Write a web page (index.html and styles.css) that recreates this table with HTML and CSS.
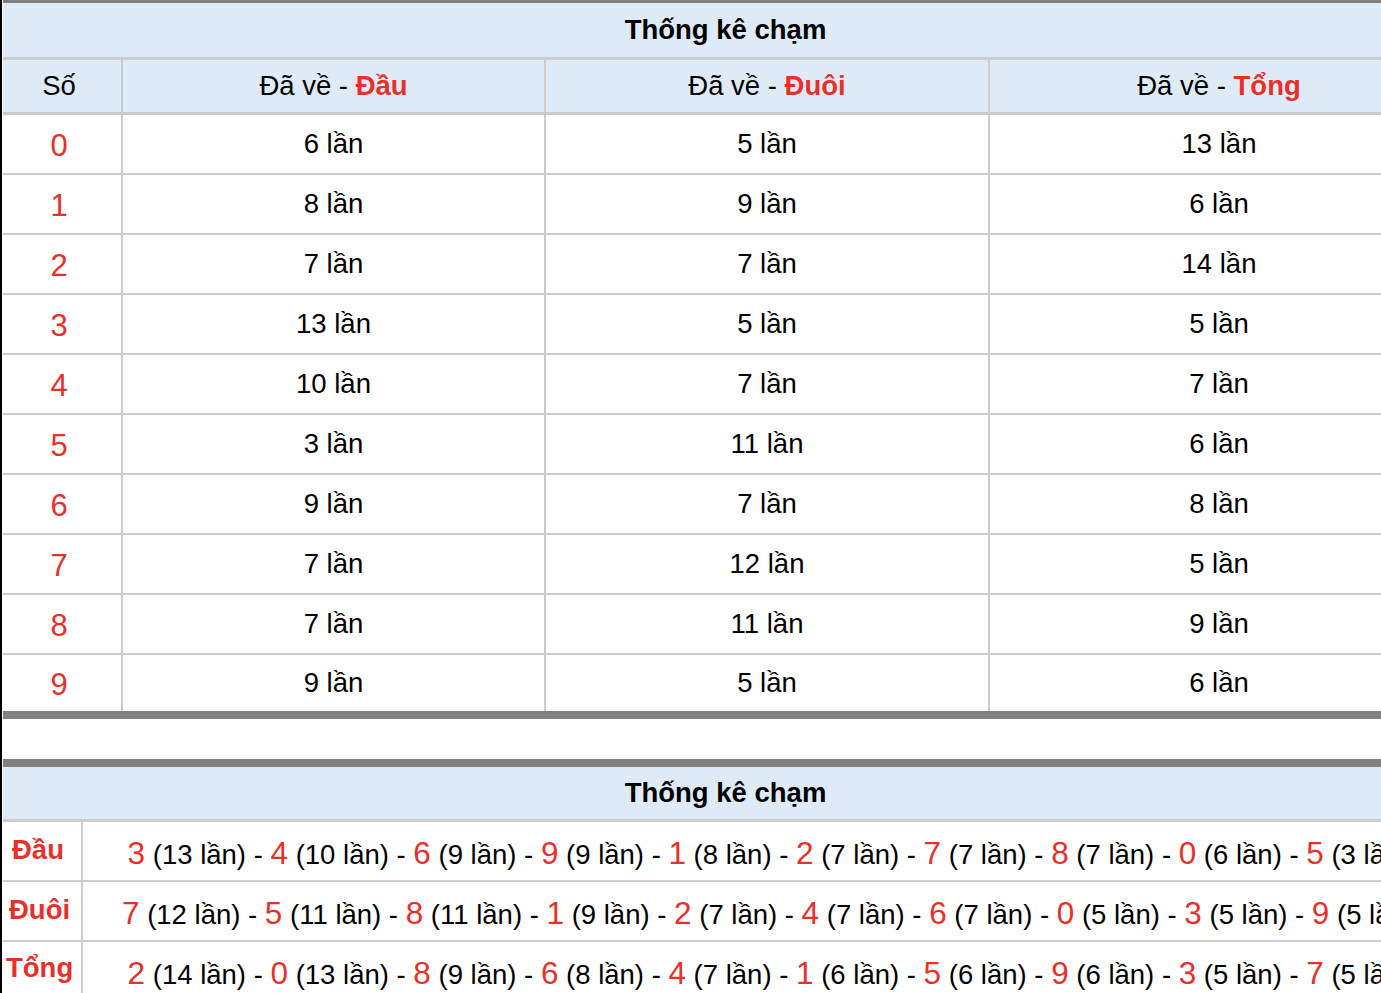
FILE: index.html
```html
<!DOCTYPE html>
<html lang="vi">
<head>
<meta charset="utf-8">
<title>Thống kê chạm</title>
<link rel="stylesheet" href="styles.css">
</head>
<body>
<div class="page">
  <div class="tbl tbl-first">
    <div class="title">Thống kê chạm</div>
    <div class="row head">
      <div class="cell first">Số</div>
      <div class="cell"><span>Đã về - <b class="red">Đầu</b></span></div>
      <div class="cell"><span>Đã về - <b class="red">Đuôi</b></span></div>
      <div class="cell"><span>Đã về - <b class="red">Tổng</b></span></div>
    </div>
    <div class="row"><div class="cell first num">0</div><div class="cell">6 lần</div><div class="cell">5 lần</div><div class="cell">13 lần</div></div>
    <div class="row"><div class="cell first num">1</div><div class="cell">8 lần</div><div class="cell">9 lần</div><div class="cell">6 lần</div></div>
    <div class="row"><div class="cell first num">2</div><div class="cell">7 lần</div><div class="cell">7 lần</div><div class="cell">14 lần</div></div>
    <div class="row"><div class="cell first num">3</div><div class="cell">13 lần</div><div class="cell">5 lần</div><div class="cell">5 lần</div></div>
    <div class="row"><div class="cell first num">4</div><div class="cell">10 lần</div><div class="cell">7 lần</div><div class="cell">7 lần</div></div>
    <div class="row"><div class="cell first num">5</div><div class="cell">3 lần</div><div class="cell">11 lần</div><div class="cell">6 lần</div></div>
    <div class="row"><div class="cell first num">6</div><div class="cell">9 lần</div><div class="cell">7 lần</div><div class="cell">8 lần</div></div>
    <div class="row"><div class="cell first num">7</div><div class="cell">7 lần</div><div class="cell">12 lần</div><div class="cell">5 lần</div></div>
    <div class="row"><div class="cell first num">8</div><div class="cell">7 lần</div><div class="cell">11 lần</div><div class="cell">9 lần</div></div>
    <div class="row"><div class="cell first num">9</div><div class="cell">9 lần</div><div class="cell">5 lần</div><div class="cell">6 lần</div></div>
  </div>

  <div class="tbl tbl-second">
    <div class="title">Thống kê chạm</div>
    <div class="row2">
      <div class="cell label">Đầu</div>
      <div class="cell list"><span><span class="d">3</span> (13 lần) - <span class="d">4</span> (10 lần) - <span class="d">6</span> (9 lần) - <span class="d">9</span> (9 lần) - <span class="d">1</span> (8 lần) - <span class="d">2</span> (7 lần) - <span class="d">7</span> (7 lần) - <span class="d">8</span> (7 lần) - <span class="d">0</span> (6 lần) - <span class="d">5</span> (3 lần)</span></div>
    </div>
    <div class="row2">
      <div class="cell label">Đuôi</div>
      <div class="cell list"><span><span class="d">7</span> (12 lần) - <span class="d">5</span> (11 lần) - <span class="d">8</span> (11 lần) - <span class="d">1</span> (9 lần) - <span class="d">2</span> (7 lần) - <span class="d">4</span> (7 lần) - <span class="d">6</span> (7 lần) - <span class="d">0</span> (5 lần) - <span class="d">3</span> (5 lần) - <span class="d">9</span> (5 lần)</span></div>
    </div>
    <div class="row2">
      <div class="cell label">Tổng</div>
      <div class="cell list"><span><span class="d">2</span> (14 lần) - <span class="d">0</span> (13 lần) - <span class="d">8</span> (9 lần) - <span class="d">6</span> (8 lần) - <span class="d">4</span> (7 lần) - <span class="d">1</span> (6 lần) - <span class="d">5</span> (6 lần) - <span class="d">9</span> (6 lần) - <span class="d">3</span> (5 lần) - <span class="d">7</span> (5 lần)</span></div>
    </div>
  </div>
</div>
</body>
</html>
```
FILE: styles.css
```css
html, body {
  margin: 0;
  padding: 0;
  overflow: hidden;
  background: #fff;
}
body {
  font-family: "Liberation Sans", Arial, Helvetica, sans-serif;
  font-size: 27.5px;
  color: #000;
}
* { box-sizing: border-box; }

.page {
  width: 1381px;
  height: 993px;
  overflow: hidden;
  border-left: 2px solid #000;
  padding-left: 1px;
}

.tbl {
  width: 1445px;
}
.tbl-first {
  border-top: 3px solid #808080;
  border-bottom: 8px solid #808080;
}
.tbl-second {
  margin-top: 40px;
  border-top: 8px solid #808080;
}

.title {
  background: #deebf7;
  font-weight: bold;
  text-align: center;
  display: flex;
  align-items: center;
  justify-content: center;
  height: 57px;
  border-bottom: 3px solid #cccccc;
}
.tbl-second .title {
  height: 55px;
}

.row {
  display: grid;
  grid-template-columns: 120px 423px 444px 458px;
  height: 60px;
  border-bottom: 2px solid #cccccc;
}
.row:last-child {
  height: 56px;
  border-bottom: none;
}
.row.head {
  background: #deebf7;
  height: 55px;
  border-bottom: 3px solid #cccccc;
}

.cell {
  display: flex;
  align-items: center;
  justify-content: center;
  border-right: 2px solid #cccccc;
  white-space: nowrap;
}
.cell:last-child {
  border-right: none;
}
.cell.first {
  padding-right: 6px;
}

.red { color: #e8302a; font-weight: bold; }
.num {
  color: #e8302a;
  font-size: 31px;
  padding-top: 3px;
}

.row2 {
  display: grid;
  grid-template-columns: 80px 1365px;
  height: 60px;
  border-bottom: 2px solid #cccccc;
}
.label {
  color: #e8302a;
  font-weight: bold;
  justify-content: flex-start;
  padding-left: 9px;
  padding-bottom: 2px;
}
.row2:nth-child(3) .label { padding-left: 6px; }
.row2:nth-child(4) .label { padding-left: 3px; padding-bottom: 6px; }
.list {
  padding-top: 5px;
  padding-left: 6px;
}
.d {
  color: #e8302a;
  font-size: 31.5px;
}
```
